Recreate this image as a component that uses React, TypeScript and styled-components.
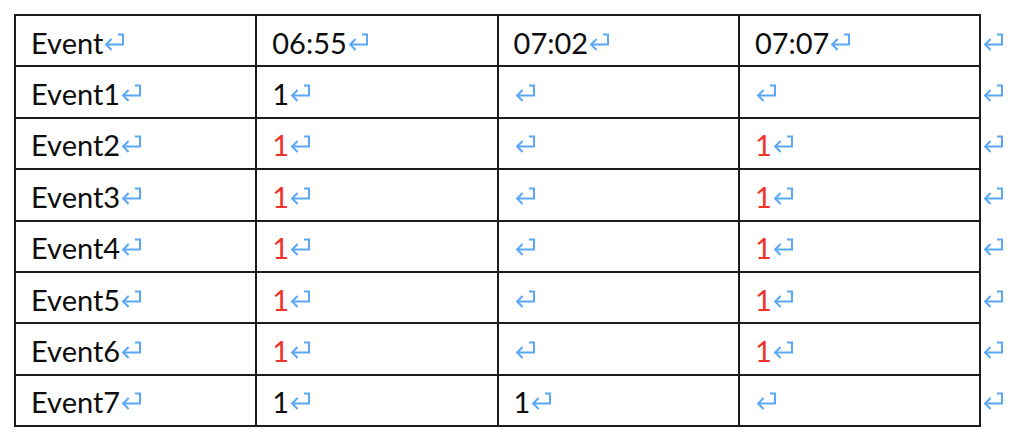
import styled, { createGlobalStyle } from "styled-components";

const GlobalStyle = createGlobalStyle`
  html, body {
    margin: 0;
    padding: 0;
    background: #ffffff;
  }
`;

const Page = styled.div`
  padding: 14px 0 0 14px;
  font-family: Lato, "Open Sans", "Liberation Sans", sans-serif;
  color: #111111;
`;

const Table = styled.table`
  border-collapse: collapse;
  table-layout: fixed;
`;

const Row = styled.tr`
  height: 51.4px;
`;

const Cell = styled.td`
  width: 224.3px;
  padding: 3px 0 0 15px;
  border: 2px solid #1c1c1c;
  font-size: 29px;
  line-height: 1;
  white-space: nowrap;
  vertical-align: middle;
`;

const MarkCell = styled.td`
  width: 30px;
  padding: 3px 0 0 1px;
  border: none;
  font-size: 29px;
  line-height: 1;
  vertical-align: middle;
`;

const Value = styled.span<{ $red?: boolean }>`
  color: ${(p) => (p.$red ? "#f0342a" : "#0d0d0d")};
`;

const Mark = styled.svg`
  display: inline-block;
  width: 21px;
  height: 18px;
  margin-left: 1px;
  vertical-align: 3px;
`;

const Return = () => (
  <Mark viewBox="0 0 21 18" fill="none" stroke="#5aa7f6" strokeWidth="2">
    <path d="M14 1.5H19V11.5H2.2" />
    <path d="M7.6 6L2.1 11.5L7.6 17" />
  </Mark>
);

type CellData = { text: string; red?: boolean };

const rows: CellData[][] = [
  [{ text: "Event" }, { text: "06:55" }, { text: "07:02" }, { text: "07:07" }],
  [{ text: "Event1" }, { text: "1" }, { text: "" }, { text: "" }],
  [{ text: "Event2" }, { text: "1", red: true }, { text: "" }, { text: "1", red: true }],
  [{ text: "Event3" }, { text: "1", red: true }, { text: "" }, { text: "1", red: true }],
  [{ text: "Event4" }, { text: "1", red: true }, { text: "" }, { text: "1", red: true }],
  [{ text: "Event5" }, { text: "1", red: true }, { text: "" }, { text: "1", red: true }],
  [{ text: "Event6" }, { text: "1", red: true }, { text: "" }, { text: "1", red: true }],
  [{ text: "Event7" }, { text: "1" }, { text: "1" }, { text: "" }],
];

const App = () => {
  return (
    <>
      <GlobalStyle />
      <Page>
        <Table>
          <tbody>
            {rows.map((row, i) => (
              <Row key={i}>
                {row.map((c, j) => (
                  <Cell key={j}>
                    <Value $red={c.red}>{c.text}</Value>
                    <Return />
                  </Cell>
                ))}
                <MarkCell>
                  <Return />
                </MarkCell>
              </Row>
            ))}
          </tbody>
        </Table>
      </Page>
    </>
  );
};

export default App;
